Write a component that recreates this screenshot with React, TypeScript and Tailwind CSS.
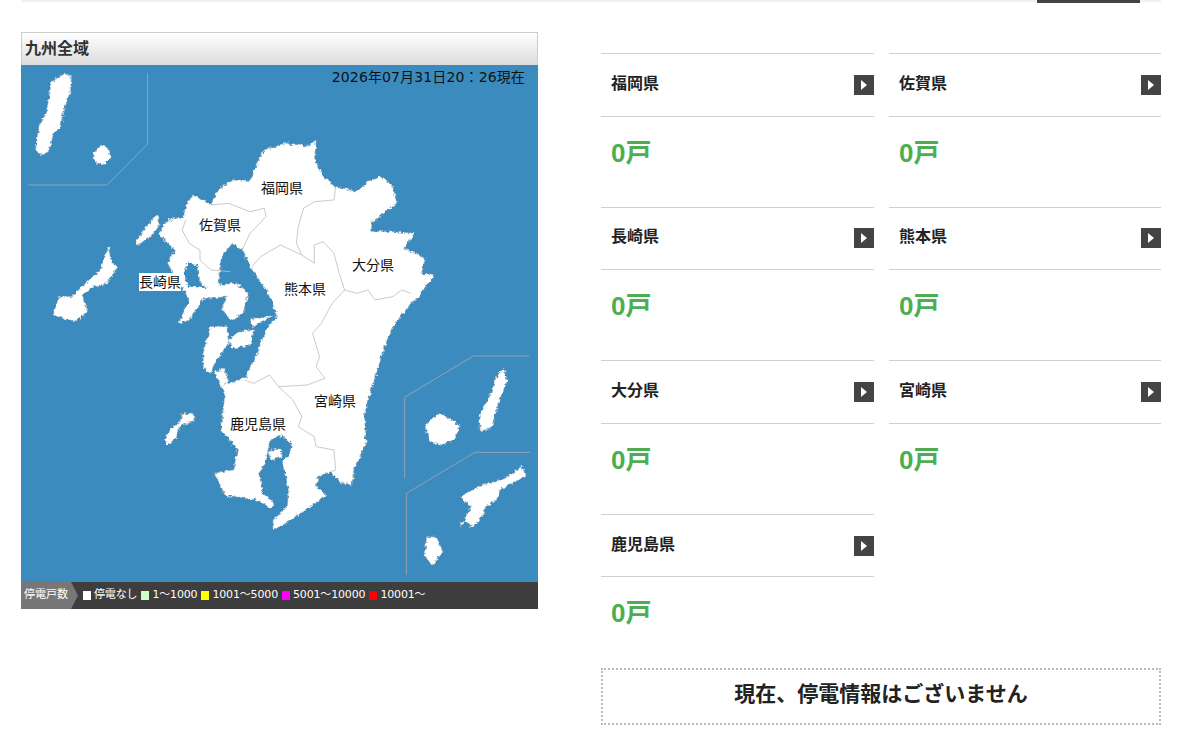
const MAIN =
  '885,420 880,480 905,530 940,560 1000,575 1030,545 1065,528 1100,560 1110,610 1075,640 1040,665 1040,695 1090,695 1160,700 1130,745 1190,775 1180,820 1215,828 1190,860 1175,890 1150,910 1100,980 1080,1030 1050,1130 1020,1240 1025,1330 990,1410 985,1455 950,1445 925,1415 890,1430 885,1460 915,1485 860,1525 800,1570 765,1590 765,1560 805,1520 808,1470 800,1420 790,1385 810,1365 820,1335 790,1305 755,1320 745,1380 725,1420 735,1480 768,1510 760,1525 720,1500 630,1485 600,1420 655,1410 665,1350 620,1290 630,1180 620,1150 625,1155 660,1145 690,1130 720,1060 745,990 775,950 760,900 740,860 700,800 680,750 650,730 620,770 610,855 660,850 695,880 680,940 650,960 620,930 635,890 570,895 530,960 500,970 530,900 520,880 490,830 470,790 490,750 470,730 445,700 470,660 515,650 520,620 540,585 570,600 590,615 610,570 650,540 700,545 720,490 740,450 800,430 860,440';

const ISLANDS = [
  '180,222 200,230 195,280 175,340 170,380 150,400 135,455 115,465 100,450 110,375 130,340 145,245',
  '285,435 300,445 310,470 290,495 265,485 262,460',
  '305,740 310,790 330,800 300,850 260,860 230,885 245,935 210,965 150,945 165,890 200,890 240,850 280,810',
  '440,645 445,680 420,710 385,735 380,725 410,680',
  '510,1240 545,1245 540,1265 505,1275 495,1310 470,1335 460,1320 480,1285 505,1265',
  '590,980 635,980 640,1030 600,1090 590,1120 570,1105 570,1050',
  '640,1020 665,995 710,990 700,1035 650,1045',
  '700,960 770,945 740,960 705,980',
  '600,1115 625,1105 640,1140 620,1160',
  '1230,1240 1265,1260 1288,1280 1270,1320 1230,1335 1200,1320 1190,1275',
  '1410,1105 1420,1140 1395,1210 1375,1285 1345,1292 1342,1250 1375,1180 1390,1130',
  '1460,1395 1472,1430 1440,1445 1400,1470 1390,1500 1360,1520 1350,1550 1325,1580 1300,1560 1320,1520 1290,1490 1340,1460 1400,1440 1440,1420',
  '1290,1565 1300,1565 1290,1580',
  '1310,1570 1328,1575 1322,1583',
  '1195,1610 1222,1612 1240,1655 1212,1695 1190,1670',
  '750,1355 785,1345 790,1370 760,1380',
];

const OMURA = '525,785 555,800 560,850 580,865 530,860 515,830';

const BORDERS = [
  '940,560 935,600 880,605 850,625 835,680 830,730 845,765 880,790 880,735 905,725 935,760 950,820 965,870 1000,880 1030,870 1050,900 1100,890 1125,870 1150,880',
  '965,870 930,910 900,970 875,1000 895,1070 885,1100 910,1135',
  '845,765 785,735 730,770 705,800',
  '590,615 640,610 700,635 740,625 745,650 700,700 680,745',
  '520,660 510,690 530,730 560,750 560,780 590,810 645,815',
  '685,1140 710,1150 755,1125 780,1160 860,1155 910,1135',
  '780,1160 820,1200 845,1250 835,1280 880,1310 885,1340 935,1350 940,1410 925,1415',
];

const FRAMES = [
  '413,220 413,432 300,555 78,555',
  '1482,1068 1325,1068 1133,1192 1133,1435',
  '1485,1357 1330,1357 1138,1480 1138,1725',
];

const LABELS = [
  { name: '福岡県', x: 240, y: 114 },
  { name: '佐賀県', x: 178, y: 151 },
  { name: '長崎県', x: 118, y: 208, boxed: true },
  { name: '大分県', x: 331, y: 191 },
  { name: '熊本県', x: 263, y: 215 },
  { name: '宮崎県', x: 293, y: 327 },
  { name: '鹿児島県', x: 209, y: 350 },
];

const LEGEND = [
  { label: '停電なし', color: 'bg-white' },
  { label: '1～1000', color: 'bg-[#ccffcc]' },
  { label: '1001～5000', color: 'bg-[#ffff00]' },
  { label: '5001～10000', color: 'bg-[#ff00ff]' },
  { label: '10001～', color: 'bg-[#ff0000]' },
];

const AREAS = ['福岡県', '佐賀県', '長崎県', '熊本県', '大分県', '宮崎県', '鹿児島県'];

const KyushuMap = () => (
  <svg viewBox="21 65 517 517" className="block h-[517px] w-[517px]">
    <defs>
      <filter id="coast" filterUnits="userSpaceOnUse" x="21" y="65" width="517" height="517">
        <feTurbulence type="fractalNoise" baseFrequency="0.3" numOctaves="3" seed="4" />
        <feDisplacementMap in="SourceGraphic" scale="5" xChannelSelector="R" yChannelSelector="G" />
      </filter>
    </defs>
    <g transform="scale(0.35714 0.33333)">
      {FRAMES.map((points) => (
        <polyline key={points} points={points} fill="none" stroke="#8fa3b3" strokeWidth="1" vectorEffect="non-scaling-stroke" />
      ))}
    </g>
    <g filter="url(#coast)">
      <g transform="scale(0.35714 0.33333)">
        <polygon points={MAIN} fill="#fff" stroke="#c8c8c8" strokeWidth="0.6" vectorEffect="non-scaling-stroke" />
        {ISLANDS.map((points) => (
          <polygon key={points} points={points} fill="#fff" stroke="#c8c8c8" strokeWidth="0.6" vectorEffect="non-scaling-stroke" />
        ))}
        <polygon points={OMURA} fill="#3b8bbf" />
      </g>
    </g>
    <g transform="scale(0.35714 0.33333)">
      {BORDERS.map((points) => (
        <polyline key={points} points={points} fill="none" stroke="#bdbdbd" strokeWidth="0.8" vectorEffect="non-scaling-stroke" />
      ))}
    </g>
  </svg>
);

const AreaCard = ({ name }: { name: string }) => (
  <div className="h-[153.6px] border-t border-[#d0d0d0]">
    <div className="flex h-[62.4px] items-center justify-between border-b border-[#d0d0d0] pl-[10px]">
      <span className="relative top-[-1px] text-[16px] font-bold leading-none text-[#222]">{name}</span>
      <span className="flex h-5 w-5 items-center justify-center bg-[#444]">
        <svg viewBox="0 0 6 10" className="h-[10px] w-[6px]">
          <polygon points="0,0 6,5 0,10" fill="#fff" />
        </svg>
      </span>
    </div>
    <p className="mt-[21px] pl-[10px] font-['Liberation_Sans','Noto_Sans_CJK_JP',sans-serif] text-[26px] font-bold leading-[30px] text-[#4cae50]">
      0戸
    </p>
  </div>
);

export default function App() {
  return (
    <div className="h-[745px] overflow-hidden bg-white px-[21px] font-['DejaVu_Sans','Noto_Sans_CJK_JP',sans-serif]">
      <div className="flex h-[3px] w-[1140px] justify-end bg-[linear-gradient(#f0f0f0_2px,#fff_2px)] pr-[21px]">
        <div className="h-[3px] w-[103px] bg-[#444]" />
      </div>
      <div className="flex w-[1140px] items-start">
        <section className="mt-[29px] w-[517px]">
          <h2 className="flex h-[33px] items-center border border-b-0 border-[#cccccc] bg-gradient-to-b from-white to-[#dcdcdc] pl-[3px] text-[16px] font-bold text-[#333]">
            九州全域
          </h2>
          <div className="relative bg-[#3b8bbf]">
            <KyushuMap />
            <span className="absolute right-[13px] top-[3px] text-[14px] leading-[18px] tracking-[0.13px] text-[#111]">
              2026年07月31日20：26現在
            </span>
            {LABELS.map((label) => (
              <span
                key={label.name}
                style={{ left: label.x, top: label.y }}
                className={`absolute text-[14px] leading-[18px] text-[#111] ${label.boxed ? 'bg-white' : ''}`}
              >
                {label.name}
              </span>
            ))}
          </div>
          <div className="flex h-[27px] items-center bg-[#3e3e3e] text-[11px] text-white">
            <span className="flex h-full w-[57px] items-center bg-[#777] [clip-path:polygon(0_0,50px_0,57px_50%,50px_100%,0_100%)] pl-[3px]">
              停電戸数
            </span>
            <div className="ml-[5px] flex items-center gap-[4px] tracking-[-0.16px]">
              {LEGEND.map((item) => (
                <div key={item.label} className="flex items-center gap-[3px]">
                  <span className={`h-[9px] w-[8px] ${item.color}`} />
                  <span>{item.label}</span>
                </div>
              ))}
            </div>
          </div>
        </section>
        <section className="ml-[63px] mt-[50.2px] w-[560px]">
          <div className="grid grid-cols-[273px_272px] gap-x-[15px]">
            {AREAS.map((name) => (
              <AreaCard key={name} name={name} />
            ))}
          </div>
          <div className="flex h-[57px] items-center justify-center border-2 border-dotted border-[#bbbbbb] text-[21px] font-bold text-[#222]">
            <span className="relative top-[-1px]">現在、停電情報はございません</span>
          </div>
        </section>
      </div>
    </div>
  );
}
